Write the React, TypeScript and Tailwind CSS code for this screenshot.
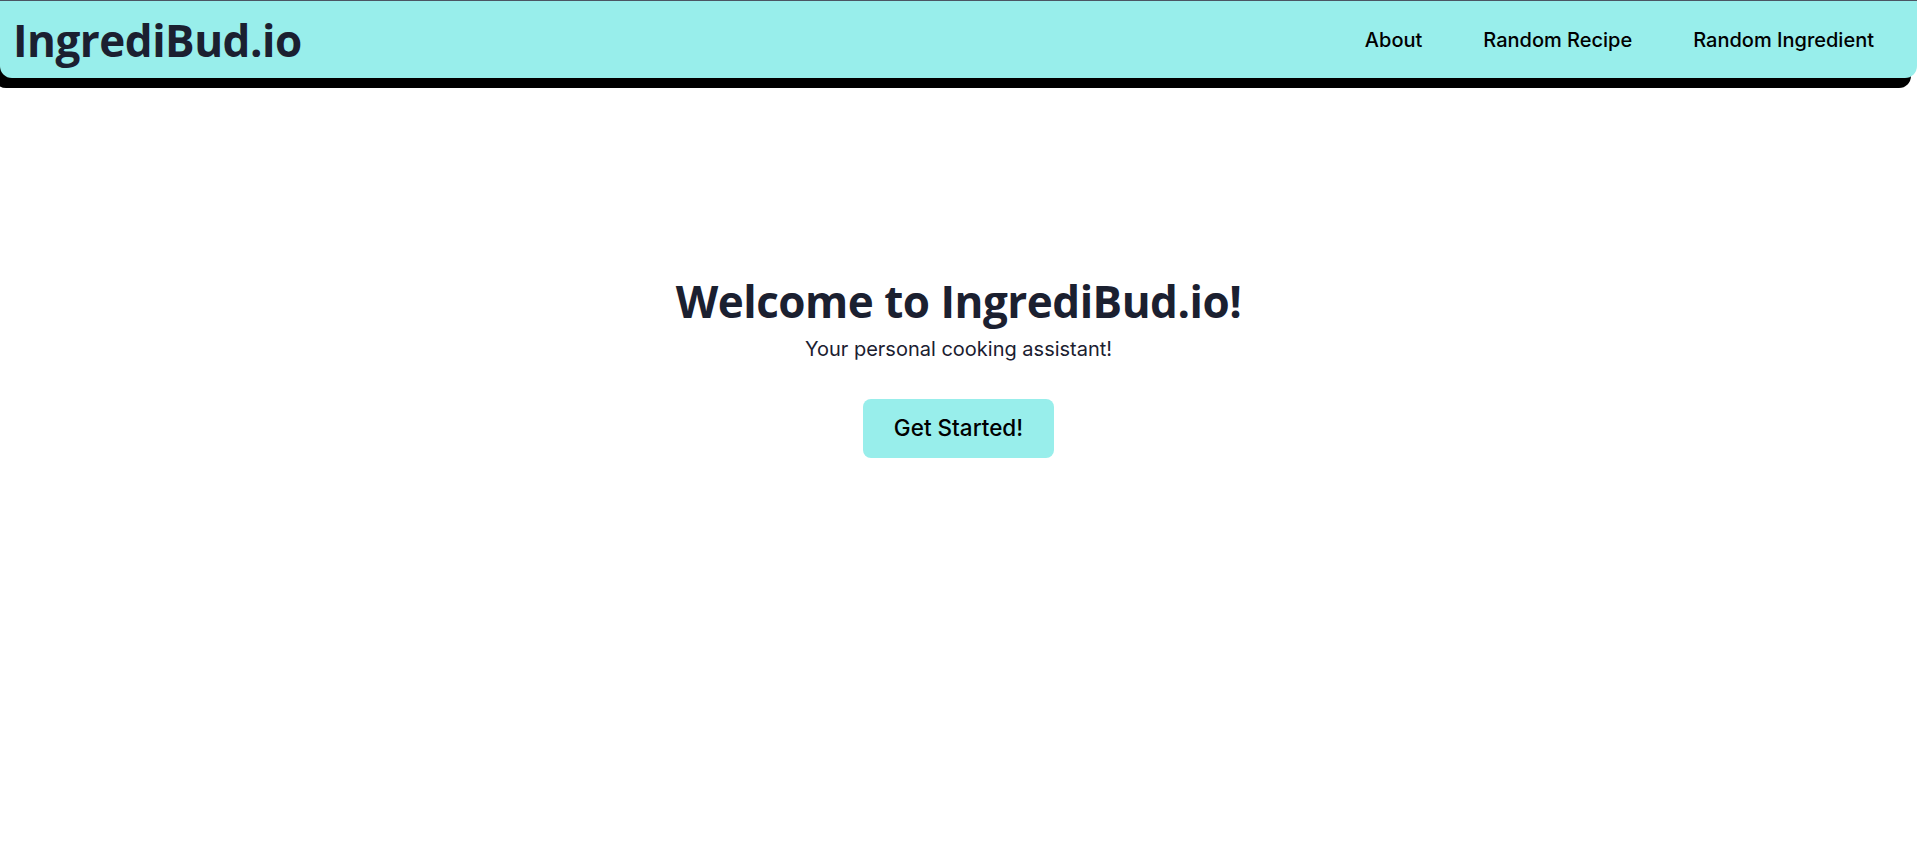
import React from "react";

export default function App() {
  return (
    <div className="min-h-screen bg-white" style={{ fontFamily: "Inter, 'Liberation Sans', sans-serif" }}>
      <nav className="flex h-[78px] items-center justify-between rounded-b-xl border-t border-[#4b5563] bg-[#98eeeb] pl-[13px] pr-[43px] shadow-[-6px_10px_0_0_#000]">
        <a className="font-['Open_Sans',sans-serif] text-[44px] font-bold tracking-[-0.5px] text-[#1b2030]">IngrediBud.io</a>
        <div className="flex items-center gap-[61px] text-[20px] font-medium text-black">
          <a>About</a>
          <a>Random Recipe</a>
          <a>Random Ingredient</a>
        </div>
      </nav>
      <main className="flex flex-col items-center pt-[197px]">
        <h1 className="font-['Open_Sans',sans-serif] text-[44px] font-bold leading-[1.2] tracking-[-0.5px] text-[#1b2030]">
          Welcome to IngrediBud.io!
        </h1>
        <p className="mt-[6px] text-[20px] text-[#1b2030]">Your personal cooking assistant!</p>
        <button className="mt-[35px] h-[59px] rounded-lg bg-[#98eeeb] px-[31px] text-[22.5px] font-medium text-black">
          Get Started!
        </button>
      </main>
    </div>
  );
}
